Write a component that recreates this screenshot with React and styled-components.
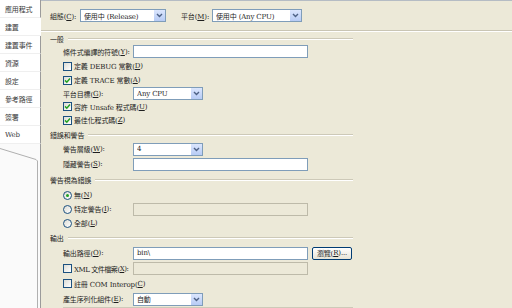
import React from 'react';
import styled, { createGlobalStyle } from 'styled-components';

const GlobalStyle = createGlobalStyle`
    html, body {
        margin: 0;
        padding: 0;
        background: #ece9d8;
    }
    body {
        font-family: 'DejaVu Serif', 'Noto Sans CJK TC', serif;
        font-size: 7px;
        letter-spacing: -0.15px;
        color: #1e1e1e;
    }
`;

const Page = styled.div`
    display: flex;
    width: 512px;
    height: 308px;
    overflow: hidden;
`;

const TabStrip = styled.div`
    width: 41px;
    display: flex;
    flex-direction: column;
    background: #fff;
`;

const Tab = styled.div`
    height: 18px;
    box-sizing: border-box;
    display: flex;
    align-items: center;
    padding-left: 5px;
    color: #3a3a3a;
    background: #fff;
    border-bottom: 1px solid #efefef;
    border-right: 1px solid ${p => (p.$active ? '#fff' : '#9b9b9b')};
`;

const TabFiller = styled.div`
    flex: 1;
    position: relative;
    background: #fafafa;
    border-right: 1px solid #9b9b9b;
`;

const Panel = styled.div`
    flex: 1;
    display: flex;
    flex-direction: column;
    border-top: 1px solid #b5bcc4;
`;

const TopBar = styled.div`
    height: 29px;
    display: flex;
    align-items: center;
    padding-left: 9px;
    border-bottom: 1px solid #c9c5b4;
    box-shadow: 0 1px 0 #fff;
`;

const TopLabel = styled.span`
    width: ${p => p.$w}px;
    flex: none;
    white-space: nowrap;
    margin-left: ${p => p.$ml || 0}px;
`;

const Body = styled.div`
    width: 303px;
    padding: 2px 0 0 9px;
    display: flex;
    flex-direction: column;
`;

const GroupHeader = styled.div`
    height: ${p => p.$h}px;
    display: flex;
    align-items: center;
    gap: 4px;
`;

const Rule = styled.div`
    flex: 1;
    height: 0;
    border-top: 1px solid #cdc9b8;
    border-bottom: 1px solid #fff;
    margin-left: ${p => p.$ml || 0}px;
`;

const Row = styled.div`
    height: ${p => p.$h}px;
    display: flex;
    align-items: center;
    padding-left: 13px;
    white-space: nowrap;
`;

const Label = styled.span`
    width: 70px;
    flex: none;
    display: flex;
    align-items: center;
    white-space: nowrap;
    letter-spacing: ${p => p.$tight ? '-0.45px' : 'inherit'};
`;

const Key = styled.span`
    text-decoration: underline;
`;

const TextBox = styled.div`
    width: 175px;
    height: 13px;
    box-sizing: border-box;
    border: 1px solid ${p => (p.$disabled ? '#bdbaa9' : '#7f9db9')};
    background: ${p => (p.$disabled ? '#ece9d8' : '#fff')};
    padding-left: 3px;
    display: flex;
    align-items: center;
`;

const ComboBox = styled.div`
    width: ${p => p.$w}px;
    height: 13px;
    flex: none;
    box-sizing: border-box;
    border: 1px solid #7f9db9;
    background: #fff;
    display: flex;
    align-items: center;
    padding-left: 3px;
    white-space: nowrap;
`;

const ComboText = styled.span`
    flex: 1;
    overflow: hidden;
`;

const DropButton = styled.div`
    width: 11px;
    height: 11px;
    background: linear-gradient(#dbe6fd, #b7cbf5);
    border-left: 1px solid #fff;
    display: flex;
    align-items: center;
    justify-content: center;
`;

const CheckBox = styled.div`
    width: 9px;
    height: 9px;
    flex: none;
    box-sizing: border-box;
    border: 1px solid #1c5180;
    background: linear-gradient(135deg, #dcdcd5, #fff);
    margin-right: 2px;
    display: flex;
    align-items: center;
    justify-content: center;
`;

const Radio = styled.div`
    width: 9px;
    height: 9px;
    flex: none;
    box-sizing: border-box;
    border: 1px solid #1c5180;
    border-radius: 50%;
    background: linear-gradient(135deg, #dcdcd5, #fff);
    margin-right: 2px;
    display: flex;
    align-items: center;
    justify-content: center;
`;

const Dot = styled.div`
    width: 3px;
    height: 3px;
    border-radius: 50%;
    background: #21a121;
`;

const Button = styled.div`
    margin-left: 4px;
    width: 40px;
    height: 13px;
    box-sizing: border-box;
    border: 1px solid #003c74;
    border-radius: 2px;
    background: linear-gradient(#fff, #e6e3d6);
    display: flex;
    align-items: center;
    justify-content: center;
`;

const Arrow = () => (
    <DropButton>
        <svg width="7" height="5" viewBox="0 0 7 5">
            <path d="M1 1 L3.5 3.5 L6 1" fill="none" stroke="#4d6185" strokeWidth="1.4" />
        </svg>
    </DropButton>
);

const Combo = ({ w, children }) => (
    <ComboBox $w={w}>
        <ComboText>{children}</ComboText>
        <Arrow />
    </ComboBox>
);

const Check = ({ checked }) => (
    <CheckBox>
        {checked && (
            <svg width="7" height="7" viewBox="0 0 7 7">
                <path d="M1 3.4 L2.8 5.2 L6 1.6" fill="none" stroke="#21a121" strokeWidth="1.5" />
            </svg>
        )}
    </CheckBox>
);

const Option = ({ checked }) => <Radio>{checked && <Dot />}</Radio>;

const tabs = ['應用程式', '建置', '建置事件', '資源', '設定', '參考路徑', '簽署', 'Web'];

const App = () => (
    <Page>
        <GlobalStyle />
        <TabStrip>
            {tabs.map(t => (
                <Tab key={t} $active={t === '建置'}>{t}</Tab>
            ))}
            <TabFiller>
                <svg width="40" height="170" style={{ position: 'absolute', left: 0, top: 0 }}>
                    <path d="M0 4.5 L36 15.5 L37.5 17 L37.5 170" fill="none" stroke="#b0b0b0" strokeWidth="1" />
                </svg>
            </TabFiller>
        </TabStrip>
        <Panel>
            <TopBar>
                <TopLabel $w={30}>組態(<Key>C</Key>):</TopLabel>
                <Combo w={86}>使用中 (Release)</Combo>
                <TopLabel $w={31} $ml={15}>平台(<Key>M</Key>):</TopLabel>
                <Combo w={90}>使用中 (Any CPU)</Combo>
            </TopBar>
            <Body>
                <GroupHeader $h={11}>一般<Rule /></GroupHeader>
                <Row $h={15}>
                    <Label>條件式編譯的符號(<Key>Y</Key>):</Label>
                    <TextBox />
                </Row>
                <Row $h={14}><Check />定義 DEBUG 常數(<Key>D</Key>)</Row>
                <Row $h={14}><Check checked />定義 TRACE 常數(<Key>A</Key>)</Row>
                <Row $h={13}>
                    <Label>平台目標(<Key>G</Key>):</Label>
                    <Combo w={70}>Any CPU</Combo>
                </Row>
                <Row $h={13}><Check checked />容許 Unsafe 程式碼(<Key>U</Key>)</Row>
                <Row $h={14}><Check checked />最佳化程式碼(<Key>Z</Key>)</Row>
                <GroupHeader $h={15}>錯誤和警告<Rule /></GroupHeader>
                <Row $h={14}>
                    <Label>警告層級(<Key>W</Key>):</Label>
                    <Combo w={70}>4</Combo>
                </Row>
                <Row $h={16}>
                    <Label>隱藏警告(<Key>S</Key>):</Label>
                    <TextBox />
                </Row>
                <GroupHeader $h={16}>警告視為錯誤<Rule /></GroupHeader>
                <Row $h={14}><Option checked />無(<Key>N</Key>)</Row>
                <Row $h={14}>
                    <Label><Option />特定警告(<Key>I</Key>):</Label>
                    <TextBox $disabled />
                </Row>
                <Row $h={14}><Option />全部(<Key>L</Key>)</Row>
                <GroupHeader $h={15}>輸出<Rule /></GroupHeader>
                <Row $h={16}>
                    <Label>輸出路徑(<Key>O</Key>):</Label>
                    <TextBox>bin\</TextBox>
                    <Button>瀏覽(<Key>R</Key>)...</Button>
                </Row>
                <Row $h={15}>
                    <Label $tight><Check />XML 文件檔案(<Key>X</Key>):</Label>
                    <TextBox $disabled />
                </Row>
                <Row $h={15}><Check />註冊 COM Interop(<Key>C</Key>)</Row>
                <Row $h={16}>
                    <Label>產生序列化組件(<Key>E</Key>):</Label>
                    <Combo w={70}>自動</Combo>
                </Row>
                <GroupHeader $h={1}><Rule $ml={13} /></GroupHeader>
            </Body>
        </Panel>
    </Page>
);

export default App;
